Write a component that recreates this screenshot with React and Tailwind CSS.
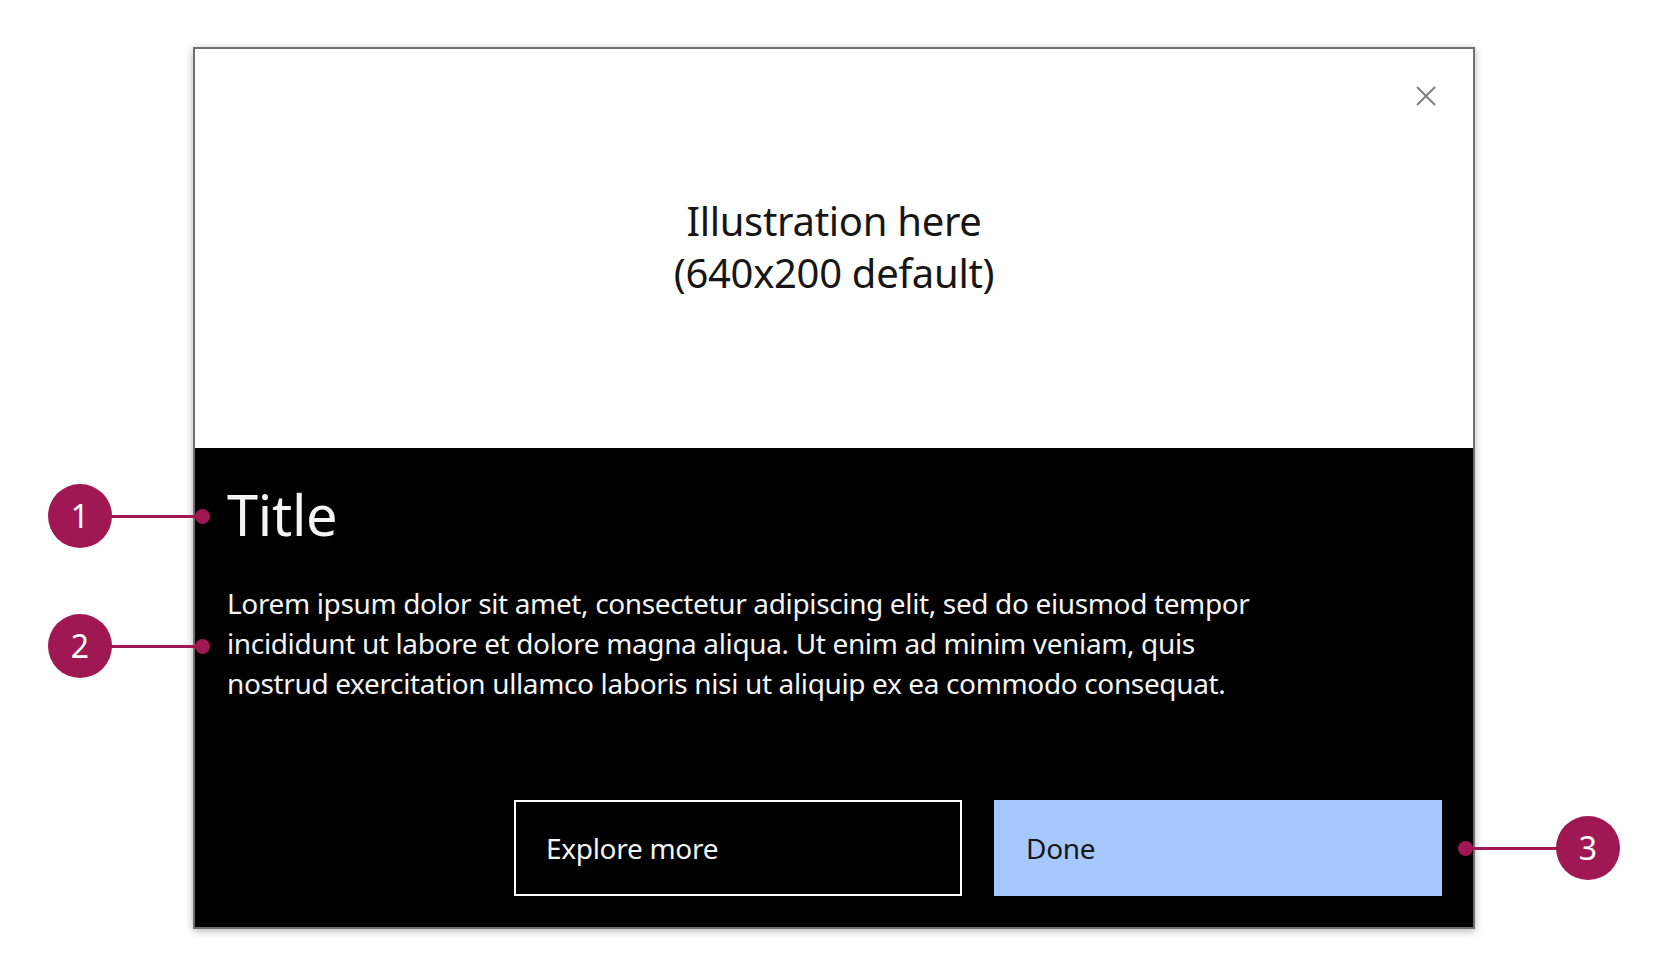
import React from "react";

function Marker({ num, cx, cy, dotX }) {
  const left = Math.min(cx, dotX);
  const right = Math.max(cx, dotX);
  return (
    <>
      <div
        className="absolute h-[3px] bg-[#9f1853]"
        style={{ left: left, top: cy - 1.5, width: right - left }}
      />
      <div
        className="absolute w-[15px] h-[15px] rounded-full bg-[#9f1853]"
        style={{ left: dotX - 7.5, top: cy - 7.5 }}
      />
      <div
        className="absolute w-[64px] h-[64px] rounded-full bg-[#9f1853] flex items-center justify-center text-white text-[32px] leading-none"
        style={{ left: cx - 32, top: cy - 32 }}
      >
        {num}
      </div>
    </>
  );
}

export default function App() {
  return (
    <div className="relative w-[1668px] h-[976px] bg-white overflow-hidden font-['Noto_Sans',sans-serif]">
      <div className="pt-[47px] pl-[193px]">
        <div className="w-[1282px] border-2 border-[#6f6f6f] shadow-[0_2px_8px_rgba(0,0,0,0.3)]">
          <div className="relative h-[399px] bg-white flex items-center justify-center">
            <button className="absolute top-[37px] right-[37px] w-[20px] h-[20px]">
              <svg width="20" height="20" viewBox="0 0 20 20">
                <path d="M1 1 L19 19 M19 1 L1 19" stroke="#7f7f7f" strokeWidth="2" />
              </svg>
            </button>
            <div className="-mt-[4px] text-center text-[40px] leading-[52px] tracking-[-0.3px] text-[#161616]">
              Illustration here
              <br />
              (640x200 default)
            </div>
          </div>
          <div className="bg-black pl-[32px] pr-[31px] pt-[30px] pb-[31px]">
            <div className="text-[56px] leading-[72px] tracking-[-0.3px] text-[#f4f4f4]">Title</div>
            <p className="mt-[33px] text-[28px] leading-[40px] tracking-[-0.36px] text-[#f4f4f4] whitespace-nowrap">
              Lorem ipsum dolor sit amet, consectetur adipiscing elit, sed do eiusmod tempor
              <br />
              incididunt ut labore et dolore magna aliqua. Ut enim ad minim veniam, quis
              <br />
              nostrud exercitation ullamco laboris nisi ut aliquip ex ea commodo consequat.
            </p>
            <div className="mt-[97px] flex justify-end gap-[32px]">
              <button className="w-[448px] h-[96px] border-2 border-white bg-black text-[#f4f4f4] text-[28px] tracking-[-0.3px] flex items-center pl-[30px] text-left">
                Explore more
              </button>
              <button className="w-[448px] h-[96px] bg-[#a6c8ff] text-[#161616] text-[28px] tracking-[-0.3px] flex items-center pl-[32px] text-left">
                Done
              </button>
            </div>
          </div>
        </div>
      </div>
      <Marker num="1" cx={80} cy={516} dotX={202.5} />
      <Marker num="2" cx={80} cy={646} dotX={202.5} />
      <Marker num="3" cx={1588} cy={848} dotX={1465.5} />
    </div>
  );
}
